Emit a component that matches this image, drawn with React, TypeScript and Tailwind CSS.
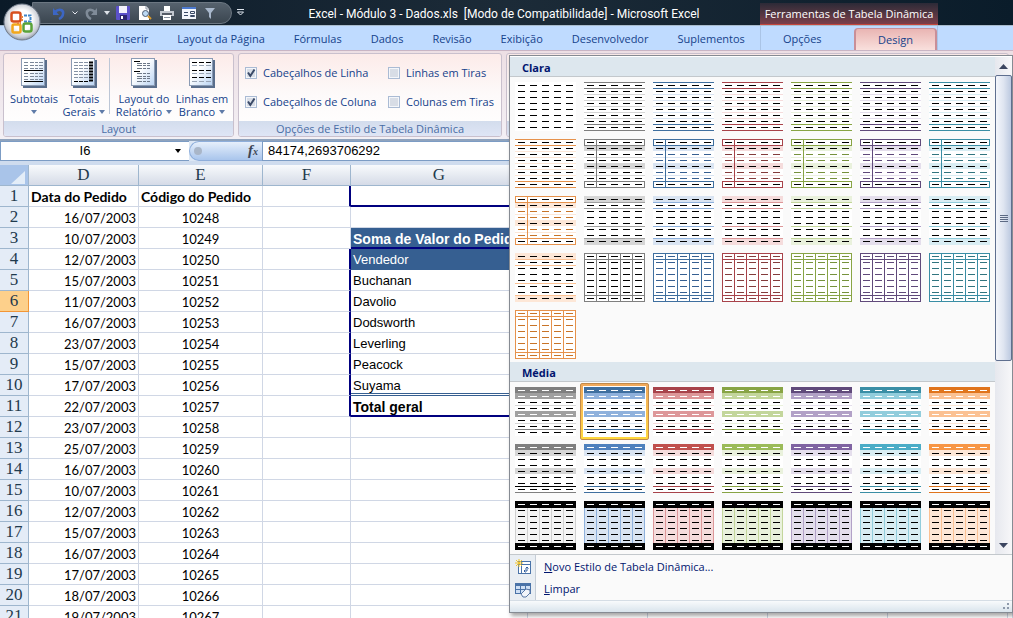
import React from 'react'

type Palette = { dark: string; main: string; mid: string; light: string; ink: string }

const gray: Palette = { dark: '#7f7f7f', main: '#7f7f7f', mid: '#a0a0a0', light: '#d6d6d6', ink: '#000000' }
const blue: Palette = { dark: '#3f6f9f', main: '#4f81bd', mid: '#8fb1dc', light: '#d9e4f2', ink: '#365f91' }
const red: Palette = { dark: '#a8434a', main: '#c0504d', mid: '#dd9799', light: '#f5dcdc', ink: '#843c3c' }
const green: Palette = { dark: '#88a444', main: '#9bbb59', mid: '#c3d69b', light: '#e9f1dc', ink: '#76923c' }
const purple: Palette = { dark: '#604a7b', main: '#8064a2', mid: '#b2a1c7', light: '#e4deec', ink: '#5f497a' }
const teal: Palette = { dark: '#3a8ea5', main: '#4bacc6', mid: '#92cddc', light: '#d8edf3', ink: '#31757f' }
const orange: Palette = { dark: '#e0741c', main: '#f79646', mid: '#fbc193', light: '#fde7d7', ink: '#c87428' }
const softOrange: Palette = { ...orange, dark: '#e6924c' }

type Kind = 'plain' | 'lines' | 'boxed' | 'banded' | 'grid' | 'header' | 'soft' | 'heavy'
type Style = { kind: Kind; p: Palette; selected?: boolean }

const row = (kind: Kind, last: Palette): Style[] => [gray, blue, red, green, purple, teal, last].map((p) => ({ kind, p }))

const lightStyles: Style[] = [
  { kind: 'plain', p: gray },
  ...row('lines', softOrange),
  ...row('boxed', softOrange),
  ...row('banded', softOrange),
  ...row('grid', softOrange),
]

const mediumStyles: Style[] = [
  ...row('header', orange).map((s, i) => ({ ...s, selected: i === 1 })),
  ...row('soft', orange),
  ...row('heavy', orange),
]

const dates = ['16', '10', '12', '15', '11', '16', '23', '15', '17', '22', '23', '25', '16', '10', '12', '15', '16', '17', '18', '19']

const sellers: Record<number, string> = {
  3: 'Soma de Valor do Pedido',
  4: 'Vendedor',
  5: 'Buchanan',
  6: 'Davolio',
  7: 'Dodsworth',
  8: 'Leverling',
  9: 'Peacock',
  10: 'Suyama',
  11: 'Total geral',
}

// 8 rows of 6px, 5 columns of 12px
function Thumb({ kind, p }: Style) {
  const H = (y: number, fill: string) => <rect key={`h${y}`} x="0" y={y} width="61" height="1" fill={fill} />
  const V = (x: number, fill: string) => <rect key={`v${x}`} x={x} y="0" width="1" height="49" fill={fill} />
  const Band = (r: number, fill: string) => <rect key={`b${r}`} x="0" y={r * 6} width="61" height="6" fill={fill} />

  let back: React.ReactNode = null
  if (kind === 'lines') back = [[12, 18, 24, 30, 36].map((y) => H(y, p.light)), [0, 6, 42, 48].map((y) => H(y, p.dark))]
  if (kind === 'boxed')
    back = [
      Band(1, p.light),
      Band(4, p.light),
      [18, 36].map((y) => H(y, p.light)),
      [0, 6, 42, 48].map((y) => H(y, p.dark)),
      V(12, p.dark),
      <path key="s" d="M.5 0v7M60.500 0v7M.5 42v7M60.500 42v7" stroke={p.dark} />,
    ]
  if (kind === 'banded') back = [Band(0, p.light), <rect key="f" y="42" width="61" height="7" fill={p.light} />, [6, 12, 30, 42].map((y) => H(y, p.mid))]
  if (kind === 'grid') back = [[0, 6, 42, 48].map((y) => H(y, p.dark)), [0, 12, 24, 36, 48, 60].map((x) => V(x, p.dark))]
  if (kind === 'header') back = [Band(0, p.dark), Band(1, p.mid), Band(4, p.mid), [18, 36].map((y) => H(y, p.light)), H(42, p.dark)]
  if (kind === 'soft')
    back = [Band(0, p.main), Band(1, p.light), Band(4, p.light), H(42, p === gray ? '#000000' : p.dark), H(48, p.dark)]
  if (kind === 'heavy')
    back = [
      <rect key="f" y="7" width="61" height="35" fill={p === gray ? '#f4f4f4' : p.light} />,
      [0, 12, 24, 36, 48, 60].map((x) => V(x, p === gray ? '#d0d0d0' : p.mid)),
      <rect key="t" width="61" height="7" />,
      <rect key="u" y="42" width="61" height="7" />,
    ]

  const dash = (r: number) => {
    if (kind === 'boxed') return [0, 1, 4, 7].includes(r) ? '#000000' : p.ink
    if (kind === 'grid') return p.ink
    if (kind === 'header') return [0, 1, 4].includes(r) ? '#ffffff' : '#000000'
    if (kind === 'soft') return r === 0 ? '#ffffff' : '#000000'
    if (kind === 'heavy') return r === 0 || r === 7 ? '#ffffff' : '#000000'
    return '#000000'
  }

  return (
    <svg width="61" height="49" viewBox="0 0 61 49" shapeRendering="crispEdges" className="block bg-white">
      {back}
      {[0, 1, 2, 3, 4, 5, 6, 7].map((r) => (
        <path key={r} d={`M3 ${r * 6 + 3.5}h7m5 0h7m5 0h7m5 0h7m5 0h7`} stroke={dash(r)} />
      ))}
    </svg>
  )
}

function Gallery({ title, styles }: { title: string; styles: Style[] }) {
  return (
    <section>
      <h2 className="h-5 border-b border-[#c3c8cc] bg-[#dde7ee] pl-3 text-[11px] leading-[22px] font-bold text-[#00156e]">{title}</h2>
      <div className="grid grid-cols-[repeat(7,61px)] gap-2 px-[5px] pt-[5px] pb-[3px]">
        {styles.map((s, i) => (
          <button key={i} type="button" aria-label={`${title} ${i + 1}`} className="relative block">
            {s.selected && (
              <span className="absolute -inset-1 rounded-xs border border-[#c28a4a] bg-linear-to-b from-[#f0a95c] to-[#ffd83c]">
                <span className="absolute inset-[2px] bg-white" />
              </span>
            )}
            <span className="relative block">
              <Thumb {...s} />
            </span>
          </button>
        ))}
      </div>
    </section>
  )
}

function Caret({ className }: { className?: string }) {
  return (
    <svg width="6" height="4" viewBox="0 0 6 4" className={className}>
      <path d="M0 0h6L3 4z" fill="currentColor" />
    </svg>
  )
}

function Sheet({ children }: { children: React.ReactNode }) {
  return (
    <svg width="26" height="30" viewBox="0 0 26 30" fill="none" className="block">
      <defs>
        <linearGradient id="sheet" x1="0" y1="0" x2="1" y2="1">
          <stop offset=".4" stopColor="#ffffff" />
          <stop offset="1" stopColor="#b9d3f3" />
        </linearGradient>
      </defs>
      <path d="M2 29h23V2" stroke="#5a6e8c" strokeWidth="2" />
      <rect x=".5" y=".5" width="23" height="27" fill="url(#sheet)" stroke="#8b9bb4" />
      {children}
    </svg>
  )
}

const lines = (x: number, w: number, ys: number[]) => ys.map((y) => `M${x} ${y}.5h${w}`).join('')

const SubtotalsIcon = () => (
  <Sheet>
    <path d={lines(3, 4, [4, 7, 10, 15, 18, 21]) + lines(9, 4, [4, 7, 10, 15, 18, 21]) + lines(14, 3, [4, 7, 10, 15, 18, 21]) + lines(18, 4, [4, 7, 10, 15, 18, 21])} stroke="#7b8798" />
    <path d={lines(3, 19, [12, 23])} stroke="#000" />
  </Sheet>
)

const TotalsIcon = () => (
  <Sheet>
    <path d={lines(3, 4, [4, 7, 10, 13, 16, 19]) + lines(8, 4, [4, 7, 10, 13, 16, 19]) + lines(13, 4, [4, 7, 10, 13, 16, 19])} stroke="#8591a3" />
    <path d={lines(18, 4, [4, 7, 10, 13, 16, 19, 22])} stroke="#000" strokeWidth="2" />
    <path d={lines(3, 4, [23]) + lines(8, 4, [23]) + lines(13, 4, [23])} stroke="#000" />
  </Sheet>
)

const ReportIcon = () => (
  <Sheet>
    <path d={lines(3, 6, [3, 13])} stroke="#000" />
    <path d={lines(6, 5, [5, 7, 10, 15, 18, 20, 23]) + lines(12, 3, [5, 7, 10, 15, 18, 20, 23]) + lines(16, 3, [5, 7, 10, 15, 18, 20, 23])} stroke="#6c7787" />
  </Sheet>
)

const BlankIcon = () => (
  <Sheet>
    <path d={lines(3, 5, [4, 12, 19]) + lines(10, 5, [4, 12, 19]) + lines(17, 5, [4, 12, 19])} stroke="#000" />
    <path d={lines(3, 5, [7, 15, 23]) + lines(10, 5, [7, 15, 23]) + lines(17, 5, [7, 15, 23])} stroke="#9aa5b5" />
  </Sheet>
)

function RibbonButton({ icon, top, bottom, width }: { icon: React.ReactNode; top: string; bottom?: string; width: string }) {
  return (
    <button type="button" className={`flex flex-col items-center text-[#15428b] ${width}`}>
      {icon}
      <span className="mt-1 leading-[13px] whitespace-nowrap">{top}</span>
      <span className="flex h-[13px] items-center gap-1 leading-[13px]">
        {bottom}
        <Caret className="text-[#5f7ba8]" />
      </span>
    </button>
  )
}

function RibbonGroup({ title, children, className }: { title: string; children: React.ReactNode; className: string }) {
  return (
    <section className={`flex shrink-0 flex-col overflow-hidden rounded-[3px] border border-[#c9c0cd] bg-linear-to-b from-[#fcebe9] via-[#fdfafa] to-white ${className}`}>
      <div className="min-h-0 flex-1">{children}</div>
      <h2 className="h-[15px] bg-linear-to-b from-[#d3dded] to-[#dfe5f5] text-center text-[11px] leading-4 text-[#4a6da5]">{title}</h2>
    </section>
  )
}

function Check({ label, checked }: { label: string; checked?: boolean }) {
  return (
    <label className="flex h-4 items-center gap-[6px] whitespace-nowrap text-[#15428b]">
      <span className="relative flex">
        <input type="checkbox" defaultChecked={checked} className="peer h-3 w-3 appearance-none border border-[#aabbd4] bg-[#d8dde6] shadow-[inset_0_0_0_1px_#f4f6fa]" />
        <svg viewBox="0 0 12 12" className="pointer-events-none absolute inset-0 hidden h-3 w-3 peer-checked:block" fill="none">
          <path d="M3 5.500L5.300 9 9.500 2.500" stroke="#3b4a68" strokeWidth="2" />
        </svg>
      </span>
      {label}
    </label>
  )
}

function OfficeButton() {
  return (
    <button type="button" aria-label="Office" className="absolute top-[3px] left-[3px] z-10">
      <svg width="38" height="38" viewBox="0 0 38 38" fill="none">
        <defs>
          <radialGradient id="orb" cx=".5" cy=".45" r=".55">
            <stop offset=".5" stopColor="#ffffff" />
            <stop offset=".85" stopColor="#c8ccd4" />
            <stop offset="1" stopColor="#8d95a3" />
          </radialGradient>
        </defs>
        <circle cx="19" cy="19" r="18" fill="url(#orb)" stroke="#737d8c" />
        <rect x="8.500" y="9.500" width="9" height="9" rx="2" stroke="#d8501e" strokeWidth="2.500" />
        <path d="M21 12.500h6.500v6H21" stroke="#3f86c9" strokeWidth="2" strokeDasharray="3 1" />
        <rect x="9.500" y="21.500" width="8" height="8" rx="1.500" stroke="#f2a71b" strokeWidth="2.500" />
        <rect x="20.500" y="20.500" width="8" height="8" rx="2" stroke="#5aa338" strokeWidth="2.500" />
        <path d="M19 13v5M14 20h4" stroke="#e9843c" strokeWidth="2" strokeDasharray="2 1" />
      </svg>
    </button>
  )
}

function QuickAccess() {
  return (
    <div className="flex h-[22px] w-[200px] items-center gap-[6px] rounded-r-full border border-[#6c7782] bg-linear-to-b from-[#56626e] to-[#3b4650] pl-[19px] text-white">
      <button type="button" aria-label="Desfazer">
        <svg width="14" height="14" viewBox="0 0 14 14" fill="none">
          <path d="M3 6c4-4 9-2 8 2 0 2-2 4-4 5" stroke="#3c66c4" strokeWidth="2.500" />
          <path d="M1 2v7h6z" fill="#3c66c4" />
        </svg>
      </button>
      <svg width="6" height="4" viewBox="0 0 6 4" fill="none" stroke="#e4e8ee"><path d="M.5 .5L3 3 5.500 .5" /></svg>
      <button type="button" aria-label="Refazer">
        <svg width="14" height="14" viewBox="0 0 14 14" fill="none">
          <path d="M11 6C7 2 2 4 3 8c0 2 2 4 4 5" stroke="#7f8b98" strokeWidth="2.500" />
          <path d="M13 2v7H7z" fill="#7f8b98" />
        </svg>
      </button>
      <Caret className="text-[#dde2e8]" />
      <div className="flex items-center gap-2">
        <button type="button" aria-label="Salvar">
          <svg width="14" height="14" viewBox="0 0 14 14">
            <rect width="14" height="14" rx="1" fill="#5b51c9" />
            <rect x="3" width="8" height="7" fill="#f2f2fb" />
            <rect x="4" y="9" width="7" height="5" fill="#2b256f" />
            <rect x="5" y="10" width="2" height="3" fill="#fff" />
          </svg>
        </button>
        <button type="button" aria-label="Visualizar impressão">
          <svg width="14" height="14" viewBox="0 0 14 14" fill="none">
            <path d="M1 0h7l3 3v11H1z" fill="#fff" />
            <path d="M8 0v3h3" stroke="#8b95a5" />
            <circle cx="7.500" cy="7.500" r="3" fill="#bcd9f3" stroke="#4c5a6e" />
            <path d="M10 10l3 3" stroke="#d99a2b" strokeWidth="2" />
          </svg>
        </button>
        <button type="button" aria-label="Imprimir">
          <svg width="14" height="14" viewBox="0 0 14 14">
            <path d="M4 0h6v6H4z" fill="#fff" />
            <path d="M0 5h14v5H0z" fill="#c3c8cf" />
            <path d="M2 7h10v2H2z" fill="#555c66" />
            <path d="M3 9h8v5H3z" fill="#fff" />
            <path d="M4 11h6v1H4z" fill="#8a93a0" />
          </svg>
        </button>
        <button type="button" aria-label="Formulário">
          <svg width="14" height="12" viewBox="0 0 14 12" fill="none">
            <rect width="14" height="12" fill="#f4f7fc" />
            <path d="M0 1h14" stroke="#4d7ad0" strokeWidth="2" />
            <path d="M2 5.500h4M2 8.500h4" stroke="#3a4a66" />
            <path d="M8.500 4.500h4v2h-4zM8.500 8.500h4v1h-4z" stroke="#3a4a66" />
          </svg>
        </button>
        <button type="button" aria-label="Filtro">
          <svg width="12" height="12" viewBox="0 0 12 12"><path d="M1 1h10L7 6v6L5 10V6z" fill="#a9b8cc" /></svg>
        </button>
      </div>
    </div>
  )
}

const tabs = ['Início', 'Inserir', 'Layout da Página', 'Fórmulas', 'Dados', 'Revisão', 'Exibição', 'Desenvolvedor', 'Suplementos']

function pivotClass(n: number) {
  const base = 'overflow-hidden pl-[2px] text-left whitespace-nowrap font-["Liberation_Sans",sans-serif] '
  if (n === 1) return base + 'border-b-2 border-[#00007f]'
  if (n === 3) return base + 'border-b-2 border-[#00007f] bg-[#365f91] text-[14px] font-bold text-white'
  if (n === 4) return base + 'bg-[#365f91] text-white'
  if (n === 10) return base + 'border-b-[3px] border-double border-[#365f91]'
  if (n === 11) return base + 'border-b-2 border-[#00007f] text-[14px] font-bold'
  return base + 'border-r border-b border-[#d0d7e5]'
}

function Worksheet() {
  const cell = 'h-[21px] overflow-hidden border-r border-b border-[#d0d7e5] p-0 pt-1 align-top leading-[14px] whitespace-nowrap'
  const head = 'h-[21px] border-r border-b border-[#9eb6ce] bg-linear-to-b from-[#f8fafc] to-[#d5dbe7] p-0 font-["Liberation_Serif",serif] text-[17px] leading-5 font-normal text-[#1f3a4d]'
  return (
    <table className="w-full table-fixed border-separate border-spacing-0 bg-white font-[Lato,sans-serif] text-[13px] text-black">
      <colgroup>
        <col className="w-[29px]" />
        <col className="w-[110px]" />
        <col className="w-[124px]" />
        <col className="w-[88px]" />
        <col className="w-[177px]" />
        <col className="w-[120px]" />
        <col className="w-[120px]" />
        <col className="w-[120px]" />
        <col className="w-[120px]" />
        <col />
      </colgroup>
      <thead>
        <tr>
          <th className="h-[21px] border-r border-b border-[#9eb6ce] bg-[#a9c4e9] p-0" aria-label="Selecionar tudo">
            <svg width="14" height="13" viewBox="0 0 14 13" className="mt-1 ml-[11px] block"><path d="M14 0v13H0z" fill="#e3edf8" /></svg>
          </th>
          {['D', 'E', 'F', 'G', 'H', 'I', 'J', 'K', ''].map((c, i) => (
            <th key={i} className={head}>{c}</th>
          ))}
        </tr>
      </thead>
      <tbody>
        {Array.from({ length: 21 }, (_, i) => i + 1).map((n) => (
          <tr key={n}>
            <th
              className={`h-[21px] border-r border-b p-0 font-["Liberation_Serif",serif] text-[17px] leading-5 font-normal text-[#1f3a4d] ${
                n === 6 ? 'border-[#f29536] bg-[#fdd08b]' : 'border-[#9eb6ce] bg-[#e4ecf7]'
              }`}
            >
              {n}
            </th>
            {n === 1 ? (
              <>
                <td className={`${cell} pl-[2px] text-[14px] font-bold`}>Data do Pedido</td>
                <td className={`${cell} pl-[2px] text-[14px] font-bold`}>Código do Pedido</td>
              </>
            ) : (
              <>
                <td className={`${cell} pr-[2px] text-right`}>{dates[n - 2]}/07/2003</td>
                <td className={`${cell} text-center`}>{10246 + n}</td>
              </>
            )}
            <td
              className={
                n === 1 || (n >= 4 && n <= 11)
                  ? 'h-[21px] border-r-2 border-b border-r-[#00007f] border-b-[#d0d7e5] p-0'
                  : cell
              }
            />
            <td className={`h-[21px] p-0 pt-1 align-top leading-[14px] ${pivotClass(n)}`}>{sellers[n]}</td>
            <td className={cell} />
            <td className={cell} />
            <td className={cell} />
            <td className={cell} />
            <td className={cell} />
          </tr>
        ))}
      </tbody>
    </table>
  )
}

function StylesMenu() {
  return (
    <div className="absolute top-[55px] right-0 left-[509px] z-20 border border-[#868b93] bg-[#fafafa] shadow-[2px_3px_4px_rgba(0,0,0,0.35)]">
      <div className="flex border-t border-white">
        <div className="h-[497px] min-w-0 flex-1 overflow-hidden">
          <Gallery title="Clara" styles={lightStyles} />
          <Gallery title="Média" styles={mediumStyles} />
        </div>
        <div className="flex w-[17px] flex-col bg-linear-to-r from-[#e6e8ee] to-[#f7f7f9]">
          <button type="button" aria-label="Rolar para cima" className="flex h-[18px] items-center justify-center text-[#3c4660]">
            <svg width="9" height="5" viewBox="0 0 9 5"><path d="M0 5h9L4.500 0z" fill="currentColor" /></svg>
          </button>
          <div className="flex h-[286px] items-center justify-center rounded-xs border border-[#5f6f8f] bg-linear-to-r from-[#f4f6fb] via-[#dfe5f1] to-[#bcc9e0]">
            <svg width="8" height="7" viewBox="0 0 8 7" shapeRendering="crispEdges"><path d="M0 .5h8M0 2.500h8M0 4.500h8M0 6.500h8" stroke="#5d6a84" /></svg>
          </div>
          <button type="button" aria-label="Rolar para baixo" className="mt-auto flex h-[18px] items-center justify-center text-[#3c4660]">
            <svg width="9" height="5" viewBox="0 0 9 5"><path d="M0 0h9L4.500 5z" fill="currentColor" /></svg>
          </button>
        </div>
      </div>
      <div className="border-t border-[#c3c8cc] text-[11px] text-[#00156e]">
        <button type="button" className="flex h-6 w-full items-center text-left">
          <span className="flex h-full w-[26px] items-center justify-center border-r border-[#c5cdd6] bg-[#e9eef3]">
            <svg width="16" height="16" viewBox="0 0 16 16" fill="none">
              <rect x="3.500" y="2.500" width="12" height="12" fill="#fff" stroke="#4a73a8" />
              <path d="M4 5.500h11M6.500 3v11" stroke="#4a73a8" />
              <path d="M9 12h3V8M10.500 9.500L12 8l1.500 1.500M10.500 10.500L9 12l1.500 1.500" stroke="#2f5c9c" />
              <path d="M4 0v8M0 4h8M1 1l6 6M7 1L1 7" stroke="#f3c62f" />
            </svg>
          </span>
          <span className="pl-2"><u>N</u>ovo Estilo de Tabela Dinâmica...</span>
        </button>
        <button type="button" className="flex h-[21px] w-full items-center text-left">
          <span className="flex h-full w-[26px] items-center justify-center border-r border-[#c5cdd6] bg-[#e9eef3]">
            <svg width="16" height="16" viewBox="0 0 16 16" fill="none">
              <rect x=".5" y="1.500" width="15" height="10" fill="#cfe0f5" stroke="#4a73a8" />
              <path d="M1 3h14" stroke="#4a73a8" strokeWidth="2" />
              <path d="M1 7.500h14M5.500 2v9M10.500 2v9" stroke="#4a73a8" />
              <path d="M6 12l5-5 4 1v3l-4 4H8z" fill="#f2f5fa" stroke="#5a79a6" />
            </svg>
          </span>
          <span className="pl-2"><u>L</u>impar</span>
        </button>
      </div>
      <div className="flex h-3 items-end justify-end border-t border-[#d5dde5] bg-linear-to-b from-[#f8fafc] to-[#d9e4ec] pr-[2px] pb-[2px]">
        <svg width="8" height="8" viewBox="0 0 8 8"><path d="M5 1h2v2H5zM5 5h2v2H5zM1 5h2v2H1z" fill="#8e99ab" /></svg>
      </div>
    </div>
  )
}

export default function App() {
  return (
    <div className='relative flex h-screen flex-col overflow-hidden bg-[#bfdbff] font-["Open_Sans",sans-serif] text-[11px]'>
      <OfficeButton />

      {/* Title bar */}
      <header className="flex h-[26px] shrink-0 items-center border-b border-[#a9bccd] bg-linear-to-r from-[#0b1a28] via-[#1c2b38] to-[#0a1c2a]">
        <div className="flex items-center pl-8">
          <QuickAccess />
          <button type="button" aria-label="Personalizar" className="ml-[5px]">
            <svg width="7" height="7" viewBox="0 0 7 7" fill="none" stroke="#dfe5ee"><path d="M0 .5h7M.5 3h6L3.500 6z" /></svg>
          </button>
        </div>
        <h1 className="flex-1 pt-[2px] pl-1 text-center font-[Roboto,sans-serif] text-[12px] whitespace-pre text-white">
          {'Excel - Módulo 3 - Dados.xls  [Modo de Compatibilidade] - Microsoft Excel'}
        </h1>
        <div className="mt-[3px] mr-[75px] h-[22px] w-[178px] self-start border-b border-[#c4463c] bg-linear-to-b from-[#2c2a37] to-[#7c3f4a] text-center leading-[22px] whitespace-nowrap text-white">
          Ferramentas de Tabela Dinâmica
        </div>
      </header>

      {/* Tabs */}
      <nav className="flex h-6 shrink-0 items-stretch gap-px pl-[45px] leading-[26px] text-[#15428b]">
        {tabs.map((t) => (
          <button key={t} type="button" className="px-[14px] whitespace-nowrap">{t}</button>
        ))}
        <div className="mr-[75px] ml-auto flex w-[178px] justify-between border-x border-[#aac4e6]">
          <button type="button" className="px-[22px]">Opções</button>
          <button type="button" className="mt-[2px] rounded-t-sm border-x-2 border-t border-[#c98f98] bg-linear-to-b from-[#e9b5b3] to-[#f9e0dd] px-[22px] leading-5">Design</button>
        </div>
      </nav>

      {/* Ribbon */}
      <div className="flex h-[89px] shrink-0 gap-1 border-t border-[#c9b5c4] bg-linear-to-b from-[#eddfe4] to-[#f3f0f5] px-[3px] pt-[2px] pb-[2px]">
        <RibbonGroup title="Layout" className="w-[231px]">
          <div className="flex pt-1">
            <RibbonButton width="w-[60px]" icon={<SubtotalsIcon />} top="Subtotais" />
            <RibbonButton width="w-[40px]" icon={<TotalsIcon />} top="Totais" bottom="Gerais" />
            <div className="mx-[5px] h-[56px] w-px bg-[#bcc6d6]" />
            <RibbonButton width="w-[58px]" icon={<ReportIcon />} top="Layout do" bottom="Relatório" />
            <RibbonButton width="w-[58px]" icon={<BlankIcon />} top="Linhas em" bottom="Branco" />
          </div>
        </RibbonGroup>
        <RibbonGroup title="Opções de Estilo de Tabela Dinâmica" className="w-[264px]">
          <div className="grid grid-cols-[143px_1fr] gap-y-[13px] pt-[11px] pl-[6px]">
            <Check label="Cabeçalhos de Linha" checked />
            <Check label="Linhas em Tiras" />
            <Check label="Cabeçalhos de Coluna" checked />
            <Check label="Colunas em Tiras" />
          </div>
        </RibbonGroup>
        <RibbonGroup title="" className="w-[503px]">{null}</RibbonGroup>
      </div>

      {/* Formula bar */}
      <div className='flex h-[26px] shrink-0 items-stretch border-t-2 border-b-4 border-t-[#8fa3bd] border-b-[#cfdcee] bg-[#dce7f5] font-["Liberation_Sans",sans-serif] text-[13px] text-black'>
        <div className="flex w-[189px] items-center border-y border-l border-[#7c9cc4] bg-white">
          <input aria-label="Caixa de nome" defaultValue="I6" className="w-[168px] text-center outline-none" />
          <button type="button" aria-label="Nomes" className="ml-[6px]">
            <Caret />
          </button>
        </div>
        <div className="flex w-[73px] items-center justify-between rounded-l-full border border-r-0 border-[#8eaedb] bg-linear-to-b from-[#e6effb] to-[#a9c5ec] pr-1 pl-1">
          <span className="h-2 w-2 rounded-full bg-[#a9b6c8]" />
          <button type="button" aria-label="Inserir função" className='font-["Liberation_Serif",serif] text-[15px] leading-4 font-bold text-[#3d4654] italic'>
            f<span className="text-[10px]">x</span>
          </button>
        </div>
        <input aria-label="Barra de fórmulas" defaultValue="84174,2693706292" className="min-w-0 flex-1 border border-[#7c9cc4] bg-white pl-[5px] outline-none" />
      </div>

      <main className="min-h-0 flex-1 overflow-hidden bg-white">
        <Worksheet />
      </main>

      <StylesMenu />
    </div>
  )
}
